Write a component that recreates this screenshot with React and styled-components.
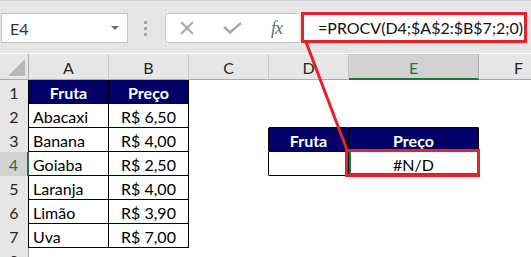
import React from 'react'
import styled, { createGlobalStyle } from 'styled-components'

const GlobalStyle = createGlobalStyle`
  body {
    margin: 0;
    background: #fff;
    overflow: hidden;
    font-family: Lato, "Noto Sans", sans-serif;
  }
`

const RED = '#e8202a'
const GREEN = '#217346'
const NAVY = '#000066'

const cols = ['A', 'B', 'C', 'D', 'E', 'F']
const widths = [29, 80, 80, 80, 80, 130, 80]
const rows = [1, 2, 3, 4, 5, 6, 7, 8]

const frutas = [
  ['Abacaxi', 'R$ 6,50'],
  ['Banana', 'R$ 4,00'],
  ['Goiaba', 'R$ 2,50'],
  ['Laranja', 'R$ 4,00'],
  ['Limão', 'R$ 3,90'],
  ['Uva', 'R$ 7,00'],
]

const inTable = (c, r) =>
  (c >= 1 && c <= 2 && r >= 1 && r <= 7) || (c >= 4 && c <= 5 && r >= 3 && r <= 4)

const cellInfo = (c, r) => {
  if (r === 1 && c <= 2 && c >= 1) return { text: c === 1 ? 'Fruta' : 'Preço', head: true }
  if (r === 3 && (c === 4 || c === 5)) return { text: c === 4 ? 'Fruta' : 'Preço', head: true }
  if (r >= 2 && r <= 7 && c === 1) return { text: frutas[r - 2][0], left: true }
  if (r >= 2 && r <= 7 && c === 2) return { text: frutas[r - 2][1] }
  if (r === 4 && c === 5) return { text: '#N/D', selected: true }
  return { text: '' }
}

const Page = styled.div`
  position: relative;
  width: 531px;
  height: 257px;
  overflow: hidden;
`

const Toolbar = styled.div`
  height: 53px;
  border-top: 1px solid #d4d4d4;
  background: #e6e6e6;
  display: flex;
  align-items: flex-start;
  padding-top: 12px;
  box-sizing: border-box;
`

const NameBox = styled.div`
  width: 127px;
  height: 30px;
  margin-left: 1px;
  box-sizing: border-box;
  background: #fff;
  border: 1px solid #c6c6c6;
  display: flex;
  align-items: center;
  justify-content: space-between;
  padding: 0 8px 0 8px;
  font-size: 16px;
  color: #333;
`

const Caret = styled.span`
  width: 0;
  height: 0;
  border-left: 4px solid transparent;
  border-right: 4px solid transparent;
  border-top: 4px solid #6b6b6b;
`

const Grip = styled.div`
  margin: 8px 18px 0 16px;
  display: flex;
  flex-direction: column;
  gap: 3px;
`

const Dot = styled.span`
  width: 3px;
  height: 3px;
  background: #a5a5a5;
`

const CommandBox = styled.div`
  width: 134px;
  height: 30px;
  box-sizing: border-box;
  background: #fff;
  border: 1px solid #c6c6c6;
  border-right: none;
  display: flex;
  align-items: center;
  padding-left: 13px;
  gap: 28px;
`

const Fx = styled.span`
  font-family: "Liberation Serif", serif;
  font-style: italic;
  font-size: 18px;
  color: #6a6a6a;
  margin-left: 1px;
  letter-spacing: -1px;
`

const FormulaBox = styled.div`
  width: 226px;
  height: 31px;
  margin-top: -1px;
  margin-left: 2px;
  box-sizing: border-box;
  border: 3px solid ${RED};
  background: #fff;
  display: flex;
  align-items: center;
  padding-left: 14px;
  font-size: 16px;
  color: #111;
  white-space: nowrap;
`

const Sheet = styled.div`
  display: grid;
  grid-template-columns: ${widths.map(w => w + 'px').join(' ')};
  grid-template-rows: 26px repeat(8, 24px);
  margin-top: 1px;
`

const Corner = styled.div`
  background: #e6e6e6;
  border-right: 1px solid #ababab;
  border-bottom: 1px solid #ababab;
  display: flex;
  justify-content: flex-end;
  align-items: flex-end;
  padding: 0 3px 3px 0;
`

const CornerMark = styled.span`
  width: 0;
  height: 0;
  border-left: 17px solid transparent;
  border-bottom: 17px solid #b8b8b8;
`

const ColHead = styled.div`
  background: ${p => (p.$active ? '#d2d2d2' : '#e6e6e6')};
  border-right: 1px solid ${p => (p.$active ? '#ababab' : '#c6c6c6')};
  border-bottom: ${p => (p.$active ? `2px solid ${GREEN}` : '1px solid #ababab')};
  display: flex;
  align-items: center;
  justify-content: center;
  padding-top: 2px;
  font-size: 16px;
  color: ${p => (p.$active ? GREEN : '#262626')};
`

const RowHead = styled.div`
  background: ${p => (p.$active ? '#d2d2d2' : '#e6e6e6')};
  border-right: ${p => (p.$active ? `2px solid ${GREEN}` : `1px solid ${p.$edge}`)};
  display: flex;
  align-items: center;
  justify-content: center;
  padding-top: 1px;
  font-size: 16px;
  color: ${p => (p.$active ? GREEN : '#262626')};
`

const Cell = styled.div`
  box-sizing: border-box;
  background: ${p => (p.$head ? NAVY : '#fff')};
  border-right: 1px solid ${p => (p.$right ? '#000' : '#fff')};
  border-bottom: 1px solid ${p => (p.$bottom ? '#000' : '#fff')};
  box-shadow: ${p => (p.$selected ? `inset 2px 0 0 ${GREEN}, inset 0 -2px 0 ${GREEN}` : 'none')};
  display: flex;
  align-items: center;
  justify-content: ${p => (p.$left ? 'flex-start' : 'center')};
  padding: 2px 0 0 ${p => (p.$left ? '4px' : '0')};
  font-size: 16px;
  font-weight: ${p => (p.$head ? 700 : 400)};
  color: ${p => (p.$head ? '#fff' : '#000')};
  white-space: nowrap;
  overflow: hidden;
`

const Annotation = styled.svg`
  position: absolute;
  left: 0;
  top: 0;
  pointer-events: none;
`

const CancelIcon = () => (
  <svg width="16" height="14" viewBox="0 0 16 14">
    <path d="M2 1 L14 13 M14 1 L2 13" stroke="#a8a8a8" strokeWidth="2" fill="none" />
  </svg>
)

const CheckIcon = () => (
  <svg width="19" height="12" viewBox="0 0 19 12">
    <path d="M1 5 L7 10.5 L18 1" stroke="#a8a8a8" strokeWidth="2.4" fill="none" />
  </svg>
)

const App = () => {
  return (
    <Page>
      <GlobalStyle />
      <Toolbar>
        <NameBox>
          E4
          <Caret />
        </NameBox>
        <Grip>
          <Dot />
          <Dot />
          <Dot />
        </Grip>
        <CommandBox>
          <CancelIcon />
          <CheckIcon />
          <Fx>fx</Fx>
        </CommandBox>
        <FormulaBox>=PROCV(D4;$A$2:$B$7;2;0)</FormulaBox>
      </Toolbar>
      <Sheet>
        <Corner>
          <CornerMark />
        </Corner>
        {cols.map(c => (
          <ColHead key={c} $active={c === 'E'}>{c}</ColHead>
        ))}
        {rows.map(r => (
          <React.Fragment key={r}>
            <RowHead $active={r === 4} $edge={inTable(1, r) ? '#000' : '#ababab'}>{r}</RowHead>
            {cols.map((c, i) => {
              const ci = i + 1
              const info = cellInfo(ci, r)
              return (
                <Cell
                  key={c}
                  $head={info.head}
                  $left={info.left}
                  $selected={info.selected}
                  $right={inTable(ci, r) || inTable(ci + 1, r)}
                  $bottom={inTable(ci, r) || inTable(ci, r + 1)}
                >
                  {info.text}
                </Cell>
              )
            })}
          </React.Fragment>
        ))}
      </Sheet>
      <Annotation width="531" height="257">
        <line x1="306" y1="42" x2="347" y2="150" stroke={RED} strokeWidth="3" />
        <rect x="346.5" y="150.5" width="132" height="25" fill="none" stroke={RED} strokeWidth="3" />
      </Annotation>
    </Page>
  )
}

export default App
